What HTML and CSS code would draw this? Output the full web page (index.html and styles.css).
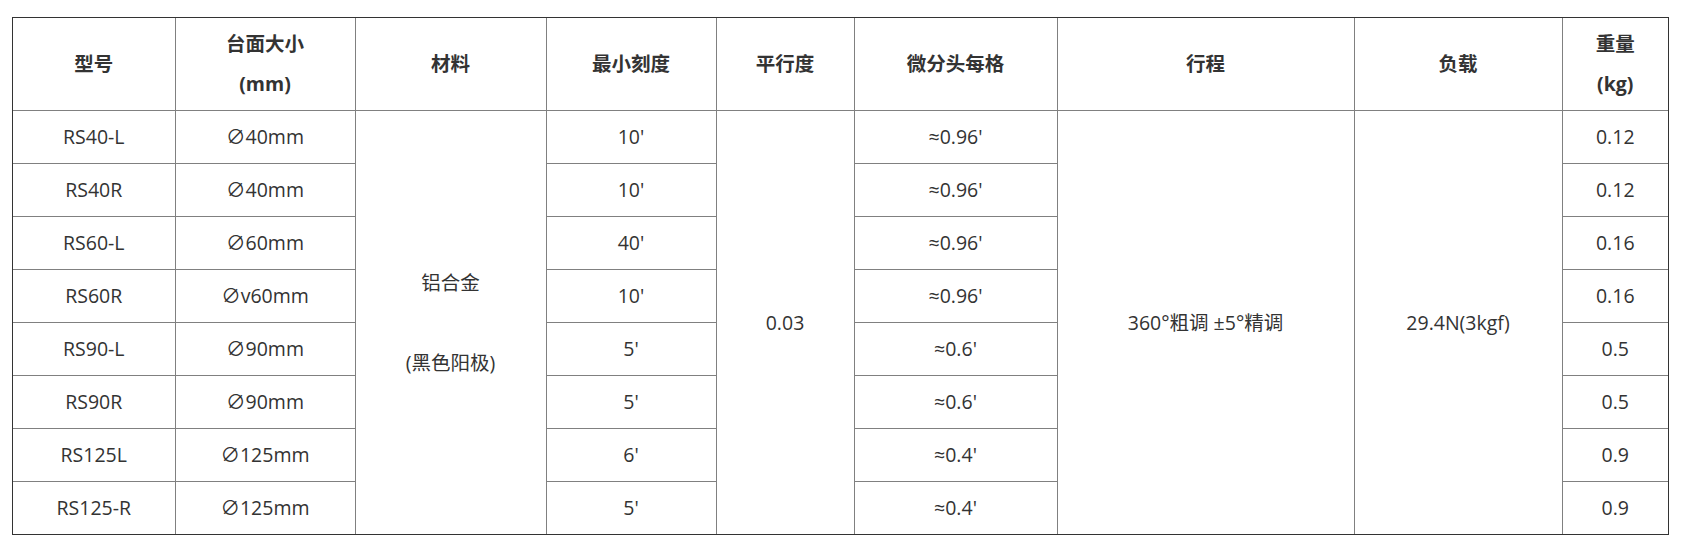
FILE: index.html
```html
<!DOCTYPE html>
<html lang="zh-CN">
<head>
<meta charset="utf-8">
<title>规格表</title>
<link rel="stylesheet" href="styles.css">
</head>
<body>
<div class="page">
  <div class="frame">
    <table class="spec">
      <colgroup>
        <col class="c1"><col class="c2"><col class="c3"><col class="c4"><col class="c5">
        <col class="c6"><col class="c7"><col class="c8"><col class="c9">
      </colgroup>
      <thead>
        <tr>
          <th>型号</th>
          <th>台面大小<br>(mm)</th>
          <th>材料</th>
          <th>最小刻度</th>
          <th>平行度</th>
          <th>微分头每格</th>
          <th>行程</th>
          <th>负载</th>
          <th>重量<br>(kg)</th>
        </tr>
      </thead>
      <tbody>
        <tr>
          <td>RS40-L</td><td>∅40mm</td>
          <td rowspan="8">铝合金<br><br>(黑色阳极)</td>
          <td>10'</td>
          <td rowspan="8">0.03</td>
          <td>≈0.96'</td>
          <td rowspan="8">360°粗调 ±5°精调</td>
          <td rowspan="8">29.4N(3kgf)</td>
          <td>0.12</td>
        </tr>
        <tr><td>RS40R</td><td>∅40mm</td><td>10'</td><td>≈0.96'</td><td>0.12</td></tr>
        <tr><td>RS60-L</td><td>∅60mm</td><td>40'</td><td>≈0.96'</td><td>0.16</td></tr>
        <tr><td>RS60R</td><td>∅v60mm</td><td>10'</td><td>≈0.96'</td><td>0.16</td></tr>
        <tr><td>RS90-L</td><td>∅90mm</td><td>5'</td><td>≈0.6'</td><td>0.5</td></tr>
        <tr><td>RS90R</td><td>∅90mm</td><td>5'</td><td>≈0.6'</td><td>0.5</td></tr>
        <tr><td>RS125L</td><td>∅125mm</td><td>6'</td><td>≈0.4'</td><td>0.9</td></tr>
        <tr><td>RS125-R</td><td>∅125mm</td><td>5'</td><td>≈0.4'</td><td>0.9</td></tr>
      </tbody>
    </table>
  </div>
</div>
</body>
</html>
```
FILE: styles.css
```css
html, body {
  margin: 0;
  padding: 0;
  background: #ffffff;
}
body {
  font-family: "Open Sans", "Noto Sans CJK SC", sans-serif;
  font-size: 19.5px;
  color: #333333;
}
.page {
  padding: 17px 0 0 12px;
}
.frame {
  width: 1655px;
  border: 1px solid #333333;
}
.spec {
  width: 1655px;
  table-layout: fixed;
  border-collapse: collapse;
  border: 1px hidden;
}
.c1 { width: 162px; }
.c2 { width: 180px; }
.c3 { width: 191px; }
.c4 { width: 170px; }
.c5 { width: 138px; }
.c6 { width: 203px; }
.c7 { width: 297px; }
.c8 { width: 208px; }
.c9 { width: 106px; }
.spec th,
.spec td {
  border: 1px solid #808080;
  padding: 6px 4px;
  line-height: 40px;
  text-align: center;
  vertical-align: middle;
  color: #333333;
}
.spec th {
  font-weight: 700;
  height: 80px;
}
.spec td {
  font-weight: 400;
  height: 40px;
}
```
